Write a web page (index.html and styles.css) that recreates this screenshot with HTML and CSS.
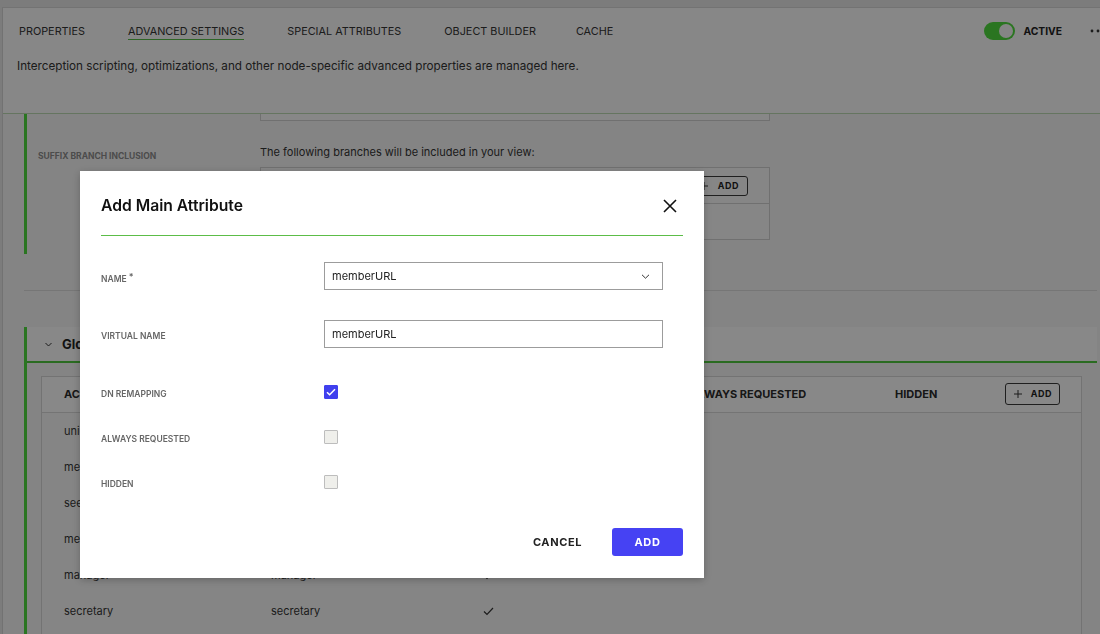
FILE: index.html
```html
<!DOCTYPE html>
<html lang="en">
<head>
<meta charset="utf-8">
<title>Advanced Settings</title>
<link rel="stylesheet" href="styles.css">
</head>
<body>
<div class="app">
  <header class="topbar">
    <div class="tabs-row">
      <nav class="tabs">
        <span class="tab">Properties</span>
        <span class="tab active">Advanced Settings</span>
        <span class="tab">Special Attributes</span>
        <span class="tab">Object Builder</span>
        <span class="tab">Cache</span>
      </nav>
      <div class="status">
        <span class="toggle"><span class="knob"></span></span>
        <span class="status-label">Active</span>
        <svg class="more" width="16" height="4" viewBox="0 0 16 4"><circle cx="2" cy="2" r="1.4"/><circle cx="8" cy="2" r="1.4"/><circle cx="14" cy="2" r="1.4"/></svg>
      </div>
    </div>
    <p class="desc">Interception scripting, optimizations, and other node-specific advanced properties are managed here.</p>
  </header>

  <main class="content">
    <section class="sec-suffix">
      <div class="box-prev"></div>
      <div class="sec-label">Suffix Branch Inclusion</div>
      <div class="sec-body">
        <p class="intro">The following branches will be included in your view:</p>
        <div class="box">
          <div class="box-head">
            <span class="add-btn"><svg width="8" height="8" viewBox="0 0 8 8"><path d="M4 0v8M0 4h8" stroke="#333" stroke-width="1"/></svg>Add</span>
          </div>
          <div class="box-row"></div>
        </div>
      </div>
    </section>

    <div class="divider"></div>

    <section class="sec-global">
      <div class="global-head">
        <svg width="7" height="5" viewBox="0 0 7 5"><path d="M0.5 1l3 3 3-3" fill="none" stroke="#333" stroke-width="1"/></svg>
        <span class="global-title">Global Attributes</span>
      </div>
      <div class="table">
        <div class="trow thead">
          <span>Actual Name</span>
          <span>Virtual Name</span>
          <span>DN Remapping</span>
          <span>Always Requested</span>
          <span>Hidden</span>
          <span class="add-btn tall"><svg width="8" height="8" viewBox="0 0 8 8"><path d="M4 0v8M0 4h8" stroke="#333" stroke-width="1"/></svg>Add</span>
        </div>
        <div class="trow"><span>uniqueMember</span><span>uniqueMember</span><span class="chk"><svg width="11" height="9" viewBox="0 0 11 9"><path d="M1 4.5l3 3 6-6.5" fill="none" stroke="#333" stroke-width="1.2"/></svg></span><span></span><span></span><span></span></div>
        <div class="trow"><span>member</span><span>member</span><span class="chk"><svg width="11" height="9" viewBox="0 0 11 9"><path d="M1 4.5l3 3 6-6.5" fill="none" stroke="#333" stroke-width="1.2"/></svg></span><span></span><span></span><span></span></div>
        <div class="trow"><span>seeAlso</span><span>seeAlso</span><span class="chk"><svg width="11" height="9" viewBox="0 0 11 9"><path d="M1 4.5l3 3 6-6.5" fill="none" stroke="#333" stroke-width="1.2"/></svg></span><span></span><span></span><span></span></div>
        <div class="trow"><span>memberURL</span><span>memberURL</span><span class="chk"><svg width="11" height="9" viewBox="0 0 11 9"><path d="M1 4.5l3 3 6-6.5" fill="none" stroke="#333" stroke-width="1.2"/></svg></span><span></span><span></span><span></span></div>
        <div class="trow"><span>manager</span><span>manager</span><span class="chk"><svg width="11" height="9" viewBox="0 0 11 9"><path d="M1 4.5l3 3 6-6.5" fill="none" stroke="#333" stroke-width="1.2"/></svg></span><span></span><span></span><span></span></div>
        <div class="trow"><span>secretary</span><span>secretary</span><span class="chk"><svg width="11" height="9" viewBox="0 0 11 9"><path d="M1 4.5l3 3 6-6.5" fill="none" stroke="#333" stroke-width="1.2"/></svg></span><span></span><span></span><span></span></div>
        <div class="trow"></div>
      </div>
    </section>
  </main>
</div>

<div class="overlay">
  <div class="modal" role="dialog" aria-labelledby="modal-title">
    <div class="modal-head">
      <h2 class="modal-title" id="modal-title">Add Main Attribute</h2>
      <button class="close" aria-label="Close"><svg width="14" height="14" viewBox="0 0 14 14"><path d="M1 1l12 12M13 1L1 13" stroke="#111" stroke-width="1.6"/></svg></button>
    </div>
    <div class="form">
      <div class="field text">
        <span class="flabel">Name<span class="req">*</span></span>
        <div class="control"><span>memberURL</span><svg width="9" height="5" viewBox="0 0 9 5"><path d="M1 0.8l3.5 3.4L8 0.8" fill="none" stroke="#333" stroke-width="1"/></svg></div>
      </div>
      <div class="field text">
        <span class="flabel">Virtual Name</span>
        <div class="control"><span>memberURL</span></div>
      </div>
      <div class="field">
        <span class="flabel">DN Remapping</span>
        <span class="cb checked"><svg width="10" height="8" viewBox="0 0 10 8"><path d="M1 4.2l2.6 2.6L9 1.2" fill="none" stroke="#fff" stroke-width="1.5"/></svg></span>
      </div>
      <div class="field">
        <span class="flabel">Always Requested</span>
        <span class="cb"></span>
      </div>
      <div class="field">
        <span class="flabel">Hidden</span>
        <span class="cb"></span>
      </div>
    </div>
    <div class="footer">
      <button class="btn btn-cancel">Cancel</button>
      <button class="btn btn-add">Add</button>
    </div>
  </div>
</div>
</body>
</html>
```

FILE: styles.css
```css
* { box-sizing: border-box; }
html, body { margin: 0; height: 100%; }
body {
  background: #e2e2e2;
  font-family: Inter, "Noto Sans", sans-serif;
  color: #333;
  overflow: hidden;
}

.app {
  margin: 7px 0 0 2px;
  height: 627px;
  background: #f1f1f1;
  border-top: 1px solid #d2d2d2;
  border-left: 1px solid #cfcfcf;
  overflow: hidden;
}

/* header */
.topbar {
  height: 106px;
  background: #f6f6f6;
  border-bottom: 1px solid #b8d6b0;
  padding: 14px 14px 0 14px;
}
.tabs-row { display: flex; align-items: flex-start; }
.tabs { display: flex; gap: 43px; margin-left: 2px; }
.tab {
  font-size: 10.85px;
  line-height: 16px;
  padding: 0.5px 0;
  border-bottom: 1px solid transparent;
  text-transform: uppercase;
  color: #333;
}
.tab:last-child { margin-left: -3px; }
.tab.active { border-bottom-color: #55b845; }
.status {
  margin-left: auto;
  margin-right: -20px;
  height: 18px;
  display: flex;
  align-items: center;
}
.toggle {
  width: 31px;
  height: 18px;
  border-radius: 9px;
  background: #4ed63c;
  display: flex;
  align-items: center;
  justify-content: flex-end;
  padding-right: 2px;
}
.knob { width: 14px; height: 14px; border-radius: 50%; background: #f2f2f2; }
.status-label {
  margin-left: 8px;
  font-size: 10.3px;
  font-weight: 700;
  text-transform: uppercase;
  color: #222;
}
.more { margin-left: 28px; fill: #333; }
.desc {
  margin: 18px 0 0;
  font-size: 11.7px;
  line-height: 16px;
  color: #333;
}

/* section 1 */
.sec-suffix {
  margin-left: 21px;
  border-left: 3px solid #4ed63c;
  padding: 0 0 14px 11px;
  display: grid;
  grid-template-columns: 222px 510px;
}
.box-prev {
  grid-column: 2;
  height: 7px;
  border: 1px solid #cdcdcd;
  border-top: none;
  background: #f6f6f6;
}
.sec-label {
  padding-top: 29px;
  font-size: 8.5px;
  line-height: 12px;
  font-weight: 700;
  color: #8a8a8a;
  text-transform: uppercase;
}
.sec-body { padding-top: 24px; }
.intro { margin: 0; font-size: 11px; line-height: 14px; color: #333; }
.box {
  margin-top: 8px;
  border: 1px solid #cdcdcd;
  background: #f5f5f5;
}
.box-head {
  height: 36px;
  display: flex;
  align-items: center;
  justify-content: flex-end;
  padding-right: 21px;
  border-bottom: 1px solid #cdcdcd;
}
.box-row { height: 35px; }

.add-btn {
  display: flex;
  align-items: center;
  gap: 10px;
  height: 20px;
  padding: 0 8px 0 9px;
  border: 1px solid #3a3a3a;
  border-radius: 3px;
  font-size: 9px;
  font-weight: 700;
  letter-spacing: 0.5px;
  text-transform: uppercase;
  color: #222;
}
.add-btn.tall { height: 22px; justify-self: end; gap: 9px; padding: 0 7px 0 8px; }

.divider {
  margin: 36px 3px 0 21px;
  border-top: 1px solid #d8d8d8;
}

/* section 2 */
.sec-global {
  margin: 36px 3px 0 21px;
  border-left: 3px solid #4ed63c;
  height: 400px;
}
.global-head {
  height: 36px;
  background: #f7f7f7;
  border-bottom: 2px solid #4ec43c;
  display: flex;
  align-items: center;
  gap: 10px;
  padding-left: 18px;
}
.global-title { font-size: 13px; font-weight: 700; color: #222; }
.table {
  margin: 13px 15px 0 14px;
  border: 1px solid #d2d2d2;
  background: #f3f3f3;
}
.trow {
  display: grid;
  grid-template-columns: 207px 209px 210px 205px 1fr auto;
  align-items: center;
  height: 36px;
  padding: 0 21px 0 22px;
  font-size: 11px;
  color: #333;
}
.thead {
  background: #f8f8f8;
  border-bottom: 1px solid #d4d4d4;
  font-weight: 700;
  text-transform: uppercase;
  color: #2a2a2a;
  padding-bottom: 2px;
}
.chk { display: flex; padding-left: 3px; }

/* modal */
.overlay {
  position: fixed;
  inset: 0;
  background: rgba(0, 0, 0, 0.45);
  padding: 171px 0 0 80px;
}
.modal {
  width: 624px;
  background: #fff;
  padding: 0 21px 22px;
  box-shadow: 0 2px 8px rgba(0, 0, 0, 0.25);
}
.modal-head {
  display: flex;
  align-items: center;
  justify-content: space-between;
  padding: 23px 0 17px;
  border-bottom: 1px solid #5cbd48;
}
.modal-title {
  margin: 0;
  font-size: 15.7px;
  line-height: 24px;
  font-weight: 600;
  color: #111;
}
.close {
  width: 14px;
  height: 14px;
  margin-right: 6px;
  padding: 0;
  border: none;
  background: none;
  display: flex;
}
.form {
  padding-top: 26px;
  display: flex;
  flex-direction: column;
  gap: 17px;
}
.field { display: flex; align-items: center; min-height: 28px; }
.field.text { margin-bottom: 13px; }
.flabel {
  width: 223px;
  padding-top: 3px;
  font-size: 8.5px;
  font-weight: 600;
  color: #666;
  text-transform: uppercase;
}
.req { font-size: 9px; margin-left: 2px; vertical-align: 2px; }
.control {
  width: 339px;
  height: 28px;
  border: 1px solid #9c9c9c;
  display: flex;
  align-items: center;
  justify-content: space-between;
  padding: 0 12px 0 7px;
  font-size: 11px;
  color: #222;
}
.cb {
  width: 14px;
  height: 14px;
  border: 1px solid #bdbdbd;
  border-radius: 1px;
  background: #efefeb;
}
.cb.checked {
  background: #4040ee;
  border-color: #4040ee;
  display: flex;
  align-items: center;
  justify-content: center;
}
.footer {
  margin-top: 32px;
  display: flex;
  justify-content: flex-end;
  align-items: center;
  gap: 16px;
}
.btn {
  height: 28px;
  border: none;
  border-radius: 3px;
  font-family: Inter, "Noto Sans", sans-serif;
  font-size: 11px;
  font-weight: 700;
  letter-spacing: 0.6px;
  text-transform: uppercase;
}
.btn-cancel { background: none; color: #222; padding: 0 14px; }
.btn-add { width: 71px; background: #4642f3; color: #fff; }
```
